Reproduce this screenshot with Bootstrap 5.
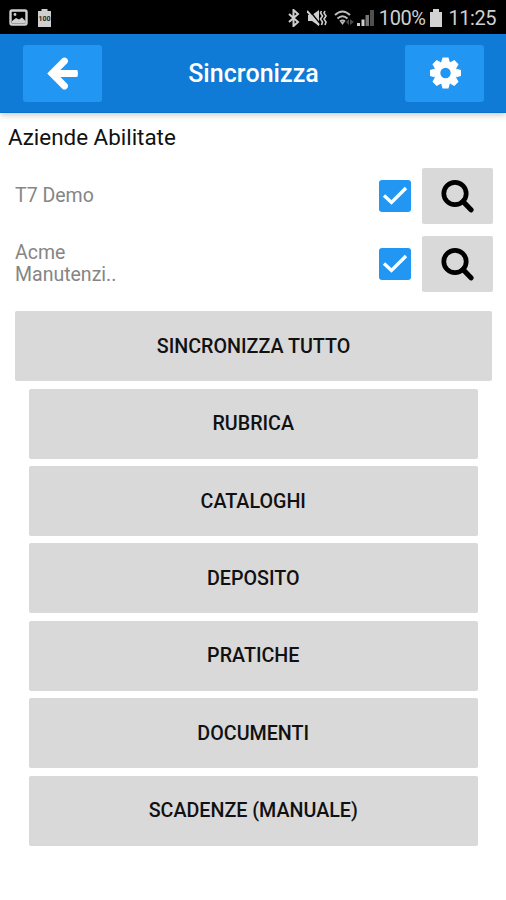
<!DOCTYPE html>
<html lang="it">
<head>
<meta charset="utf-8">
<meta name="viewport" content="width=device-width, initial-scale=1">
<title>Sincronizza</title>
<link href="https://cdn.jsdelivr.net/npm/bootstrap@5.3.0/dist/css/bootstrap.min.css" rel="stylesheet">
<style>
body{font-family:Roboto,"Liberation Sans",sans-serif;background:#fff;color:#111;height:900px;overflow:hidden}
svg{display:block;flex:none}
.status-strip{height:34px;background:#000;color:#cfcfcf;font-size:20px;line-height:34px;padding:1px 10px 0 9px}
.status-strip svg.notice{margin-left:9px}
.status-strip svg.spaced{margin-left:7px}
.status-strip svg.battery{margin-left:5px}
.status-pct{margin-left:4px;letter-spacing:-.45px}
.status-time{margin-left:6px;letter-spacing:-.45px}
.app-header{height:79px;background:#0f7bd6;padding:0 22px 0 23px;border-bottom:1px solid #0b70c8;box-shadow:0 2px 6px rgba(0,0,0,.22)}
.header-btn{width:79px;height:57px;background:#2196f3;border:0;border-radius:3px;padding:0}
.header-title{font-size:25px;font-weight:500;color:#fff;line-height:1;letter-spacing:.05px;padding-top:1px}
.section-title{font-size:22.4px;line-height:28px;padding:10px 8px 0;height:55px}
.company-row{height:56px;margin:0 13px 12px 15px}
.company-name{font-size:19.5px;line-height:22px;color:#858585;width:120px}
.form-check-input.company-check{width:32px;height:32px;margin:0 11px 0 0;border:0;border-radius:3px;flex:none}
.form-check-input.company-check:checked{background-color:#2196f3;background-image:none}
.check-cell{position:relative}
.check-cell svg{position:absolute;left:0;top:0;pointer-events:none}
.search-btn{width:71px;height:56px;background:#d9d9d9;border:0;border-radius:2px;padding:0 0 0 1px}
.actions{padding:0 14px 0 15px;margin-top:19.2px;gap:7.4px}
.action-btn{height:70px;background:#d9d9d9;border:0;border-radius:2px;font-size:19.7px;font-weight:500;color:#111;line-height:1;padding:1px 0 0}
.sub-action{margin:0 14px 0 13.5px}
</style>
<script src="https://cdn.jsdelivr.net/npm/bootstrap@5.3.0/dist/js/bootstrap.bundle.min.js"></script>
</head>
<body>
<div class="status-strip d-flex align-items-center">
  <svg width="19" height="17" viewBox="0 0 19 17"><rect x="1.5" y="1.5" width="16" height="14" rx="1.5" fill="none" stroke="#cfcfcf" stroke-width="2.4"/><path d="M3 12l4-3 3 1.500 3-2 3.500 3.500v2H3z" fill="#cfcfcf"/><circle cx="6" cy="5.5" r="1.4" fill="#cfcfcf"/></svg>
  <svg class="notice" width="15" height="20" viewBox="0 0 15 20"><path d="M1 3h3.5V1h6v2H14v16H1z" fill="#cfcfcf"/><text x="7.5" y="13" text-anchor="middle" font-size="7" font-weight="700" fill="#222">100</text></svg>
  <svg class="ms-auto" width="12" height="18" viewBox="0 0 12 18"><path d="M1 5l9 8-4.500 4V1L10 5l-9 8" fill="none" stroke="#cfcfcf" stroke-width="2"/></svg>
  <svg class="spaced" width="20" height="18" viewBox="0 0 20 18"><path d="M1 6h4L12 1v16l-7-5H1z" fill="#cfcfcf"/><path d="M2 1l12 15" stroke="#000" stroke-width="1.500"/><path d="M0 2l12 14" stroke="#cfcfcf" stroke-width="2"/><path d="M14.500 2l-1 2 2 3-2 3 2 3-1 3M18 2l-1 2 2 3-2 3 2 3-1 3" fill="none" stroke="#cfcfcf" stroke-width="1.600"/></svg>
  <svg class="spaced" width="22" height="17" viewBox="0 0 22 17"><g fill="none" stroke="#bdbdbd" stroke-width="2"><path d="M1 6Q8.500-1 16 6M3.500 9.500q5-4.500 10 0M6 12.500q2.500-2 5 0"/></g><path d="M6.500 13h4l-2 3z" fill="#bdbdbd"/><path d="M12 13l3-3v6zM20 13l-4-3v6z" fill="#484848"/></svg>
  <svg width="19" height="18" viewBox="0 0 19 18"><path d="M1 14h3v3H1zM5.500 10.500h3V17h-3z" fill="#cfcfcf"/><path d="M9.500 6h3.500v11H9.500z" fill="#777"/><path d="M14 1h4v16h-4z" fill="#505050"/></svg>
  <span class="status-pct">100%</span>
  <svg class="battery" width="12" height="18" viewBox="0 0 12 18"><path d="M0 3h3V0h6v3h3v15H0z" fill="#d2d2d2"/></svg>
  <span class="status-time">11:25</span>
</div>
<header class="app-header d-flex align-items-center justify-content-between">
  <button class="btn header-btn d-flex align-items-center justify-content-center" aria-label="Indietro">
    <svg width="32" height="34" viewBox="0.500 0.500 32 34"><path d="M18 5.500L5.500 18L18 30.500M7 18h21" fill="none" stroke="#fff" stroke-width="6.800" stroke-linecap="round" stroke-linejoin="miter"/><path d="M26 14.600h5v6.800h-5z" fill="#fff"/></svg>
  </button>
  <h1 class="header-title m-0">Sincronizza</h1>
  <button class="btn header-btn d-flex align-items-center justify-content-center" aria-label="Impostazioni">
    <svg width="32" height="32" viewBox="-16.500 -16 32 32"><g fill="#fff"><circle r="11.700"/><g id="teeth"><path d="M-4.200-11l1.200-4.500h6l1.200 4.500v22l-1.200 4.500h-6l-1.200-4.500z"/><path d="M-11-4.200v8.400l-4.500-1.200v-6zM11-4.200v8.400l4.500-1.200v-6z"/></g><use href="#teeth" transform="rotate(45)"/></g><circle r="5.200" fill="#2196f3"/></svg>
  </button>
</header>
<main>
  <h2 class="section-title fw-normal m-0">Aziende Abilitate</h2>
  <div class="company-row d-flex align-items-center">
    <div class="company-name me-auto">T7 Demo</div>
    <label class="check-cell"><input class="form-check-input company-check d-block" type="checkbox" checked aria-label="T7 Demo"><svg width="32" height="32" viewBox="0 0 32 32"><path d="M5 15.500l7.500 7L27 8" fill="none" stroke="#fff" stroke-width="3.400"/></svg></label>
    <button class="btn search-btn d-flex align-items-center justify-content-center" aria-label="Cerca"><svg width="34" height="34" viewBox="0.500 0 34 34"><circle cx="14.500" cy="14.500" r="11.200" fill="none" stroke="#000" stroke-width="4.700"/><path d="M22.500 22.500l8 8.300" stroke="#000" stroke-width="5.200" stroke-linecap="round"/></svg></button>
  </div>
  <div class="company-row d-flex align-items-center">
    <div class="company-name me-auto">Acme Manutenzi..</div>
    <label class="check-cell"><input class="form-check-input company-check d-block" type="checkbox" checked aria-label="Acme Manutenzi"><svg width="32" height="32" viewBox="0 0 32 32"><path d="M5 15.500l7.500 7L27 8" fill="none" stroke="#fff" stroke-width="3.400"/></svg></label>
    <button class="btn search-btn d-flex align-items-center justify-content-center" aria-label="Cerca"><svg width="34" height="34" viewBox="0.500 0 34 34"><circle cx="14.500" cy="14.500" r="11.200" fill="none" stroke="#000" stroke-width="4.700"/><path d="M22.500 22.500l8 8.300" stroke="#000" stroke-width="5.200" stroke-linecap="round"/></svg></button>
  </div>
  <div class="actions d-flex flex-column">
    <button class="btn action-btn">SINCRONIZZA TUTTO</button>
    <button class="btn action-btn sub-action">RUBRICA</button>
    <button class="btn action-btn sub-action">CATALOGHI</button>
    <button class="btn action-btn sub-action">DEPOSITO</button>
    <button class="btn action-btn sub-action">PRATICHE</button>
    <button class="btn action-btn sub-action">DOCUMENTI</button>
    <button class="btn action-btn sub-action">SCADENZE (MANUALE)</button>
  </div>
</main>
</body>
</html>
